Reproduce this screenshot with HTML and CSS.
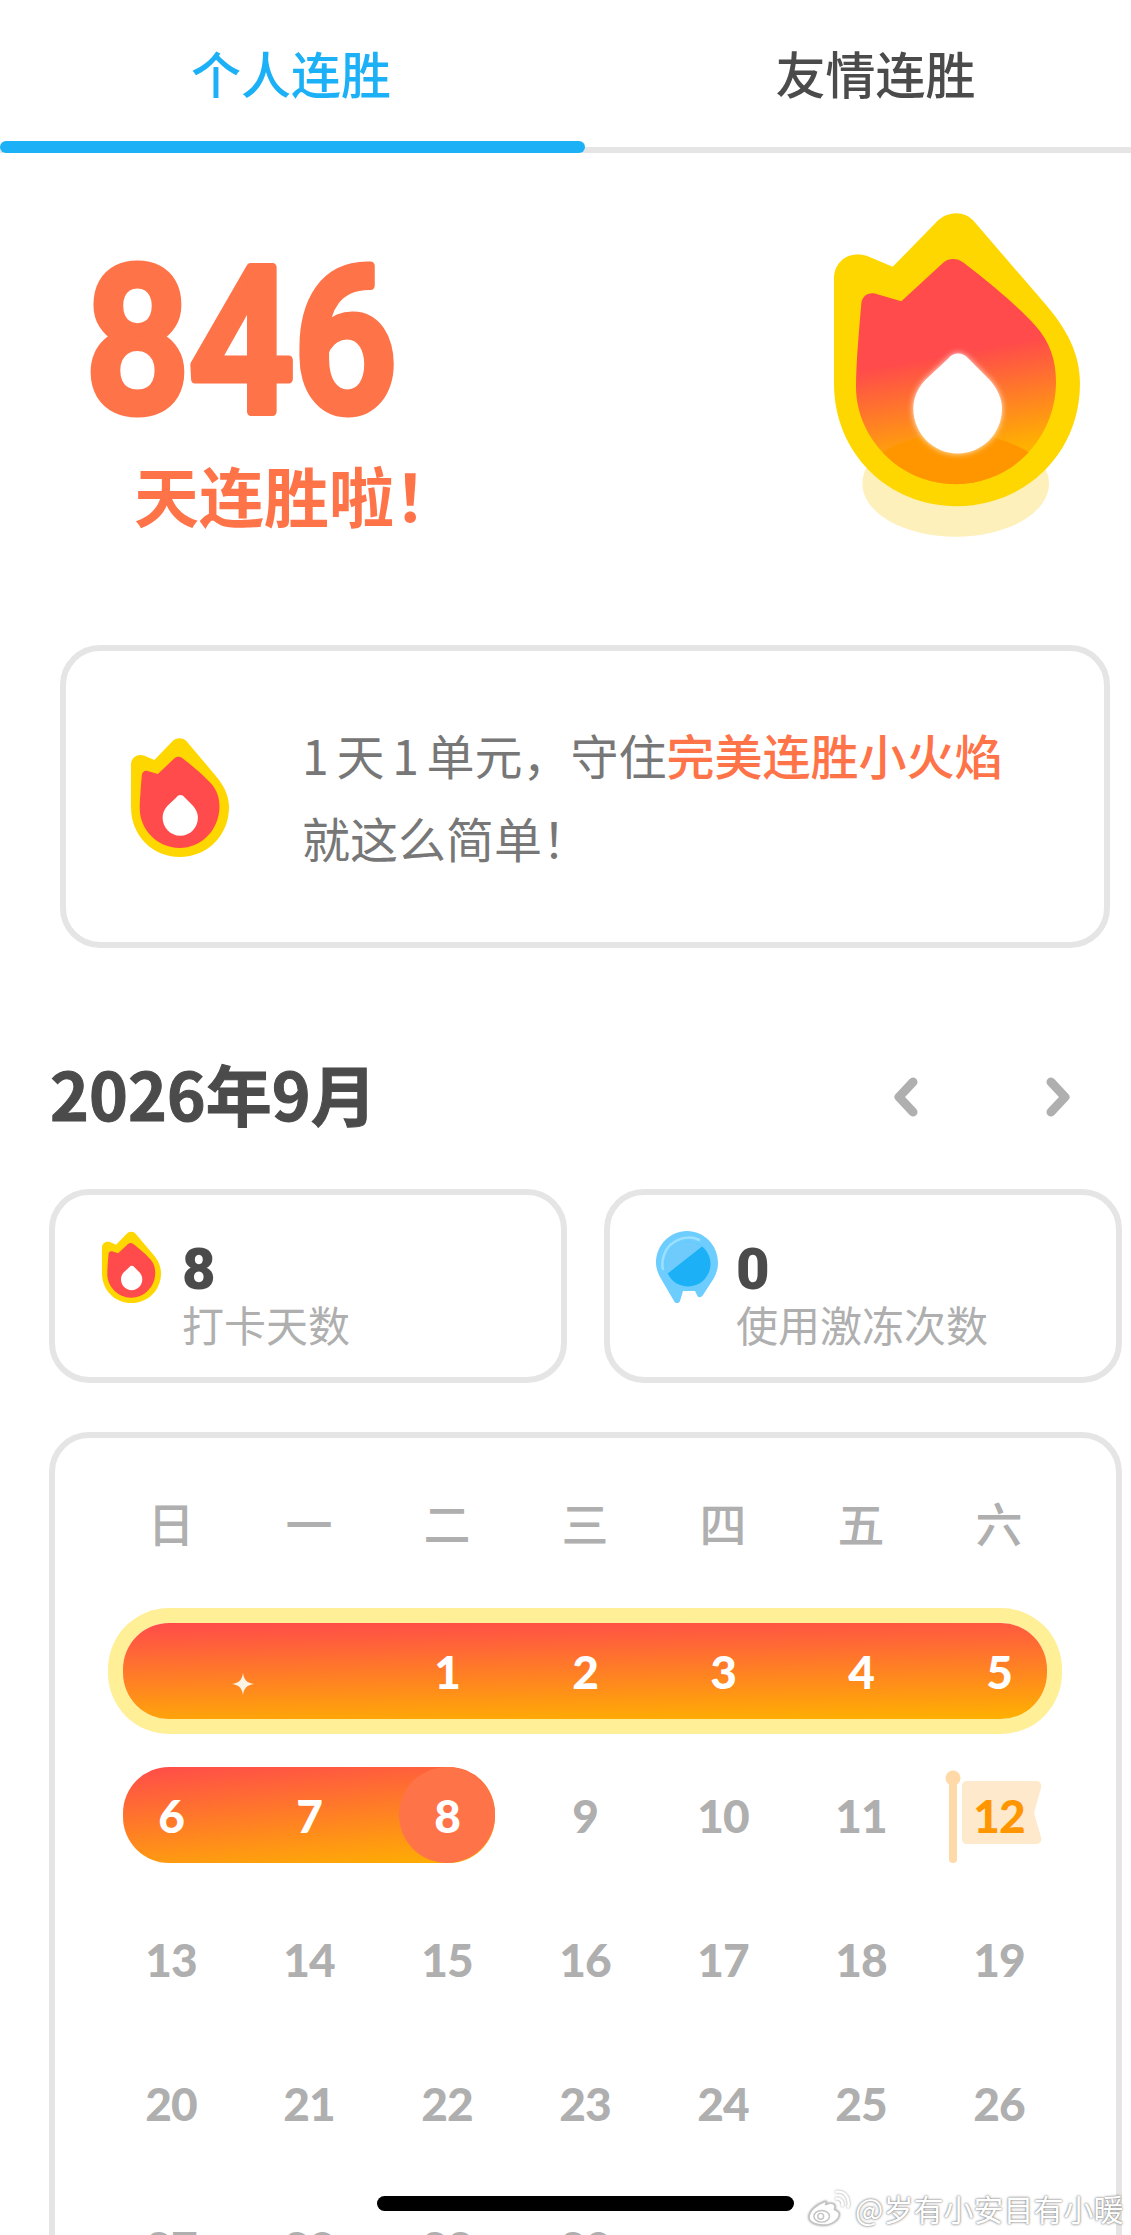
FILE: index.html
```html
<!DOCTYPE html>
<html lang="zh-CN">
<head>
    <meta charset="UTF-8">
    <meta name="viewport" content="width=device-width, initial-scale=1.0">
    <title>连胜</title>
    <link rel="stylesheet" href="styles.css">
</head>
<body>
    <svg class="defs" width="0" height="0">
        <defs>
            <linearGradient id="flameFill" x1="0.42" y1="0" x2="0.58" y2="1">
                <stop offset="0.42" stop-color="#ff4b4b"/>
                <stop offset="0.88" stop-color="#ffb100"/>
            </linearGradient>
            <clipPath id="flameClip">
                <path d="M244 340C246 318 265 305 287 311L364 333L487 220C505 203 530 203 550 217C640 285 720 355 765 405C810 455 828 510 828 575C828 745 695 882 527 882C360 882 228 745 228 590C228 520 238 410 244 340Z"/>
            </clipPath>
            <filter id="dropGlow" x="-30%" y="-30%" width="160%" height="160%">
                <feGaussianBlur stdDeviation="9"/>
            </filter>
            <symbol id="flameFlat" viewBox="162 60 738 888" preserveAspectRatio="none">
                <path fill="#ffd700" d="M162 265C162 215 205 180 260 197L338 230L465 100C500 60 555 60 585 97L790 335C860 415 900 490 900 580C900 790 735 948 530 948C325 948 162 790 162 580Z"/>
                <path fill="#ff4b4b" d="M244 340C246 318 265 305 287 311L364 333L487 220C505 203 530 203 550 217C640 285 720 355 765 405C810 455 828 510 828 575C828 745 695 882 527 882C360 882 228 745 228 590C228 520 238 410 244 340Z"/>
                <path fill="#fff" d="M505 505C520 485 548 485 565 505L630 570C652 595 666 625 666 655C666 730 607 790 533 790C460 790 400 730 400 655C400 625 412 595 435 570Z"/>
            </symbol>
        </defs>
    </svg>

    <div class="tabs">
        <div class="tab tab-active">个人连胜</div>
        <div class="tab tab-other">友情连胜</div>
    </div>

    <div class="hero">
        <div class="hero-left">
            <svg class="hero-count" viewBox="0 0 330 230">
                <text x="-6" y="201" transform="scale(0.9 1)">846</text>
            </svg>
            <div class="hero-label">天连胜啦！</div>
        </div>
        <svg class="hero-flame" viewBox="162 60 738 980">
            <ellipse cx="527" cy="880" rx="280" ry="160" fill="#fdf0ba"/>
            <path fill="#ffd700" d="M162 265C162 215 205 180 260 197L338 230L465 100C500 60 555 60 585 97L790 335C860 415 900 490 900 580C900 790 735 948 530 948C325 948 162 790 162 580Z"/>
            <path fill="url(#flameFill)" d="M244 340C246 318 265 305 287 311L364 333L487 220C505 203 530 203 550 217C640 285 720 355 765 405C810 455 828 510 828 575C828 745 695 882 527 882C360 882 228 745 228 590C228 520 238 410 244 340Z"/>
            <g clip-path="url(#flameClip)">
                <ellipse cx="527" cy="960" rx="330" ry="232" fill="#ff9600"/>
            </g>
            <path fill="#fff" opacity="0.85" filter="url(#dropGlow)" d="M505 505C520 485 548 485 565 505L630 570C652 595 666 625 666 655C666 730 607 790 533 790C460 790 400 730 400 655C400 625 412 595 435 570Z"/>
            <path fill="#fff" d="M505 505C520 485 548 485 565 505L630 570C652 595 666 625 666 655C666 730 607 790 533 790C460 790 400 730 400 655C400 625 412 595 435 570Z"/>
        </svg>
    </div>

    <div class="tip-card">
        <svg class="tip-flame"><use href="#flameFlat"/></svg>
        <p class="tip-text">1 天 1 单元，守住<span class="tip-hot">完美连胜小火焰</span><br>就这么简单！</p>
    </div>

    <div class="month-bar">
        <h2 class="month-title">2026年9月</h2>
        <div class="month-nav">
            <svg class="chevron" viewBox="0 0 26 40"><path d="M20 5L6 20L20 35"/></svg>
            <svg class="chevron" viewBox="0 0 26 40"><path d="M6 5L20 20L6 35"/></svg>
        </div>
    </div>

    <div class="stats">
        <div class="stat-card">
            <svg class="stat-icon"><use href="#flameFlat"/></svg>
            <div>
                <div class="stat-value">8</div>
                <div class="stat-label">打卡天数</div>
            </div>
        </div>
        <div class="stat-card">
            <svg class="stat-icon" viewBox="0 0 62 72">
                <path fill="#6dcdff" d="M31 0C48 0 62 14 62 32C62 38 60 43 58 47L47 64C45 67 42 67 41 64L39 60H27L24 70C23 73 19 73 18 70L4 46C2 42 0 37 0 32C0 14 14 0 31 0Z"/>
                <circle cx="32" cy="33" r="22.500" fill="#1cb0f6"/>
                <path fill="#6fcbfb" d="M46 15.500A22.500 22.500 0 0 0 11.400 42.700Z"/>
                <path fill="none" stroke="#9be0ff" stroke-width="2.500" d="M44 9.500C34 3 14 7 8 24C6 30 6 35 7 39"/>
            </svg>
            <div>
                <div class="stat-value">0</div>
                <div class="stat-label">使用激冻次数</div>
            </div>
        </div>
    </div>

    <div class="calendar">
        <div class="cal-grid cal-head">
            <span>日</span><span>一</span><span>二</span><span>三</span><span>四</span><span>五</span><span>六</span>
        </div>
        <div class="cal-grid cal-body">
            <div class="streak streak-full">
                <span class="day"></span>
                <span class="day"></span>
                <span class="day day-on">1</span>
                <span class="day day-on">2</span>
                <span class="day day-on">3</span>
                <span class="day day-on">4</span>
                <span class="day day-on">5</span>
                <svg class="sparkle" viewBox="0 0 22 22"><path d="M11 0C12 7 15 10 22 11C15 12 12 15 11 22C10 15 7 12 0 11C7 10 10 7 11 0Z"/></svg>
            </div>
            <div class="streak streak-part">
                <span class="day day-on">6</span>
                <span class="day day-on">7</span>
                <span class="day day-on day-today">8</span>
            </div>
            <span class="day">9</span>
            <span class="day">10</span>
            <span class="day">11</span>
            <div class="day day-goal">
                <svg class="goal-flag" viewBox="0 0 96 96">
                    <rect x="-2" y="8" width="8" height="88" rx="4" fill="#ffd9a8"/>
                    <circle cx="2" cy="11" r="7.500" fill="#ffd9a8"/>
                    <path fill="#ffe9cc" d="M16 14H85C89 14 91 17 90 21L83 46L90 70C91 74 89 77 85 77H16C13 77 11 75 11 72V19C11 16 13 14 16 14Z"/>
                </svg>
                <span class="goal-num">12</span>
            </div>
            <span class="day">13</span><span class="day">14</span><span class="day">15</span><span class="day">16</span><span class="day">17</span><span class="day">18</span><span class="day">19</span>
            <span class="day">20</span><span class="day">21</span><span class="day">22</span><span class="day">23</span><span class="day">24</span><span class="day">25</span><span class="day">26</span>
            <span class="day">27</span><span class="day">28</span><span class="day">29</span><span class="day">30</span>
        </div>
    </div>

    <div class="home-bar"></div>
    <div class="watermark">
        <svg class="weibo" viewBox="0 0 44 38">
            <path d="M18 12C9 15 2 22 2 28C2 33 9 36 17 36C26 36 33 30 33 25C33 22 30 21 28 20C30 15 27 13 22 14C20 15 19 15 19 15C20 12 20 11 18 12Z"/>
            <ellipse cx="15" cy="27" rx="8" ry="6"/>
            <circle cx="14" cy="27" r="3"/>
            <path class="weibo-arc" d="M29 9C34 8 38 12 36 17"/>
            <path class="weibo-arc" d="M29 2C38 0 45 8 42 18"/>
        </svg>
        <span>@岁有小安目有小暖</span>
    </div>
</body>
</html>
```

FILE: styles.css
```css
html, body {
    margin: 0;
    height: 2235px;
    overflow: hidden;
    background-color: #fff;
}
body {
    position: relative;
    font-family: "Noto Sans CJK SC", "Noto Sans", sans-serif;
    color: #4b4b4b;
}
.defs {
    position: absolute;
}

/* tabs */
.tabs {
    display: flex;
    height: 153px;
    border-bottom: 6px solid #e5e5e5;
    box-sizing: border-box;
}
.tab {
    font-size: 50px;
    font-weight: 500;
    line-height: 144px;
    text-align: center;
    box-sizing: border-box;
}
.tab-active {
    position: relative;
    width: 585px;
    padding-right: 3px;
    color: #1cb0f6;
}
.tab-active::after {
    content: "";
    position: absolute;
    left: 0;
    right: 0;
    bottom: -6px;
    height: 12px;
    border-radius: 6px;
    background-color: #1cb0f6;
}
.tab-other {
    flex: 1;
    padding-left: 35px;
}

/* hero */
.hero {
    display: flex;
    justify-content: space-between;
    height: 492px;
    padding: 57px 51px 0 91px;
    box-sizing: border-box;
}
.hero-count {
    display: block;
    width: 330px;
    height: 230px;
    overflow: visible;
}
.hero-count text {
    font-family: "Roboto", sans-serif;
    font-size: 203px;
    font-weight: 500;
    fill: #ff7349;
    stroke: #ff7349;
    stroke-width: 9;
    stroke-linejoin: round;
}
.hero-label {
    font-size: 65px;
    font-weight: 700;
    line-height: 90px;
    color: #ff7349;
    margin: 9px 0 0 43px;
}
.hero-flame {
    width: 246px;
    height: 327px;
}

/* tip card */
.tip-card {
    display: flex;
    align-items: center;
    width: 1050px;
    height: 303px;
    margin-left: 60px;
    border: 6px solid #e5e5e5;
    border-radius: 40px;
    box-sizing: border-box;
}
.tip-flame {
    width: 98px;
    height: 120px;
    margin: 0 73px 0 65px;
}
.tip-text {
    margin: -2px 0 0;
    font-size: 48px;
    line-height: 83px;
    word-spacing: -3px;
    color: #777;
}
.tip-hot {
    color: #ff7349;
    font-weight: 500;
}

/* month header */
.month-bar {
    display: flex;
    justify-content: space-between;
    align-items: center;
    height: 100px;
    margin-top: 94px;
    padding: 0 60px 0 50px;
}
.month-title {
    margin: 0;
    font-size: 66px;
    font-weight: 700;
    line-height: 100px;
    -webkit-text-stroke: 1px #4b4b4b;
}
.month-nav {
    display: flex;
    gap: 126px;
    margin-top: 10px;
}
.chevron {
    width: 26px;
    height: 40px;
    fill: none;
    stroke: #afafaf;
    stroke-width: 9;
    stroke-linecap: round;
    stroke-linejoin: round;
}

/* stat cards */
.stats {
    display: flex;
    gap: 37px;
    margin: 47px 0 0 49px;
}
.stat-card {
    display: flex;
    gap: 21px;
    width: 518px;
    height: 194px;
    padding: 36px 0 0 47px;
    border: 6px solid #e5e5e5;
    border-radius: 40px;
    box-sizing: border-box;
}
.stat-card:last-child {
    gap: 18px;
    padding-left: 46px;
}
.stat-icon {
    width: 59px;
    height: 72px;
}
.stat-card:last-child .stat-icon {
    width: 62px;
}
.stat-value {
    font-family: "Roboto", sans-serif;
    font-size: 58px;
    font-weight: 900;
    line-height: 50px;
    margin-top: 13px;
}
.stat-label {
    font-size: 42px;
    line-height: 52px;
    margin-top: 4px;
    color: #afafaf;
}

/* calendar */
.calendar {
    width: 1073px;
    height: 900px;
    margin: 49px 0 0 49px;
    padding: 58px 0 0 68px;
    border: 6px solid #e5e5e5;
    border-radius: 40px;
    box-sizing: border-box;
}
.cal-grid {
    display: grid;
    grid-template-columns: repeat(7, 96px);
    column-gap: 42px;
}
.cal-head {
    height: 60px;
    font-size: 47px;
    font-weight: 500;
    line-height: 52px;
    text-align: center;
    color: #afafaf;
}
.cal-body {
    grid-auto-rows: 96px;
    row-gap: 48px;
    margin-top: 67px;
}
.day {
    display: flex;
    align-items: center;
    justify-content: center;
    font-family: "Lato", sans-serif;
    font-size: 46px;
    font-weight: 900;
    letter-spacing: -1px;
    color: #afafaf;
}
.streak {
    position: relative;
    display: grid;
    column-gap: 42px;
    border-radius: 46px;
}
.streak-full {
    grid-column: 1 / -1;
    grid-template-columns: repeat(7, 96px);
    background: linear-gradient(179deg, #ff4b4b, #ffb100);
    box-shadow: 0 0 0 15px #ffef97;
}
.streak-part {
    grid-column: 1 / 4;
    grid-template-columns: repeat(3, 96px);
    background: linear-gradient(175deg, #ff4b4b, #ffb100);
}
.day-on {
    color: #fff;
}
.day-today {
    border-radius: 50%;
    background-color: #ff7349;
}
.sparkle {
    position: absolute;
    left: 109px;
    top: 50px;
    width: 22px;
    height: 22px;
    fill: #fbf3e3;
}
.day-goal {
    position: relative;
}
.goal-flag {
    position: absolute;
    left: 0;
    top: 0;
    width: 96px;
    height: 96px;
    overflow: visible;
}
.goal-num {
    position: relative;
    color: #ff9600;
}

/* overlays */
.home-bar {
    position: absolute;
    left: 377px;
    top: 2196px;
    width: 417px;
    height: 15px;
    border-radius: 8px;
    background-color: #000;
}
.watermark {
    position: absolute;
    left: 807px;
    top: 2188px;
    display: flex;
    align-items: center;
    gap: 5px;
    font-size: 30px;
    line-height: 40px;
    white-space: nowrap;
    color: #fff;
    text-shadow: 0 0 2px #777, 0 0 3px #aaa;
}
.weibo {
    width: 43px;
    height: 37px;
    fill: #fff;
    stroke: #c4c4c4;
    stroke-width: 1.5;
    filter: drop-shadow(0 0 1px #999);
}
.weibo-arc {
    fill: none;
    stroke: #fff;
    stroke-width: 2.500;
}
```
